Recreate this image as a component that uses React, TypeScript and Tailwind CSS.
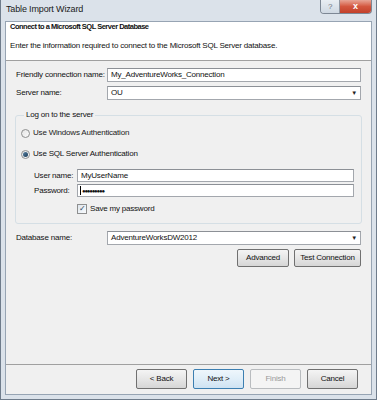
import React from "react";

const btn =
  "h-full flex items-center justify-center rounded-[2px] border border-[#707070] bg-linear-to-b from-[#f4f4f4] via-[#e6e6e6] to-[#d6d6d6] text-[#111]";

function TextBox({ value, drop }: { value: string; drop?: boolean }) {
  return (
    <div className="flex-1 h-full flex items-center border border-[#a3a7ad] border-t-[#8c9096] bg-white pl-[3px] pr-[3px]">
      <span className="flex-1 leading-[10px]">{value}</span>
      {drop && <span className="text-[6px] leading-none text-[#222]">▼</span>}
    </div>
  );
}

function Radio({ checked }: { checked?: boolean }) {
  return (
    <span className="w-[9px] h-[9px] rounded-full border border-[#8e8f8f] bg-linear-to-br from-[#e4e4e4] to-[#fbfbfb] flex items-center justify-center">
      {checked && <span className="w-[5px] h-[5px] rounded-full bg-linear-to-br from-[#5b86a8] to-[#1b3a55]" />}
    </span>
  );
}

export default function App() {
  return (
    <div className="w-[377px] h-[400px] flex flex-col bg-[#dbe2ea] border-x border-b border-[#6f7c8b] font-['Liberation_Sans',Arial,sans-serif] text-[8px] tracking-[-0.2px] text-[#111]">
      {/* title bar */}
      <div className="h-[21px] flex items-start justify-between pl-[5px] pr-[4px]">
        <span className="pt-[4px] text-[9px] leading-[11px] tracking-[-0.15px] text-[#1a1a1a]">
          Table Import Wizard
        </span>
        <div className="flex h-[14px] rounded-b-[4px] border border-t-0 border-[#7d8794] overflow-hidden">
          <div className="w-[19px] flex items-center justify-center bg-linear-to-b from-[#e9eef3] to-[#cfd8e2] border-r border-[#8f98a4] text-[8px] text-[#6b7480]">
            ?
          </div>
          <div className="w-[31px] flex items-center justify-center bg-linear-to-b from-[#e7a496] via-[#d3563f] to-[#c2402a] text-[9px] font-bold text-white">
            x
          </div>
        </div>
      </div>

      {/* inner panel */}
      <div className="flex-1 mx-[4px] mb-[4px] flex flex-col border border-[#97a4b3] bg-[#f0f0f0]">
        {/* header */}
        <div className="h-[39px] bg-white border-b border-[#a0a0a0] pl-[4px]">
          <div className="font-bold text-[7.5px] leading-[10px] tracking-[-0.5px]">
            Connect to a Microsoft SQL Server Database
          </div>
          <div className="mt-[9px] leading-[10px]">
            Enter the information required to connect to the Microsoft SQL Server database.
          </div>
        </div>

        {/* form */}
        <div className="flex-1 px-[10px] pt-[7px]">
          <div className="h-[14px] flex items-center">
            <span className="w-[91px]">Friendly connection name:</span>
            <TextBox value="My_AdventureWorks_Connection" />
          </div>
          <div className="h-[14px] mt-[4px] flex items-center">
            <span className="w-[91px]">Server name:</span>
            <TextBox value="OU" drop />
          </div>

          <fieldset className="mt-[10px] -mx-[1px] border border-[#d5dfe5] rounded-[3px] pl-[5px] pr-[7px] pb-[9px]">
            <legend className="ml-[3px] px-[2px] leading-[10px]">Log on to the server</legend>
            <div className="mt-[8px] h-[10px] flex items-center gap-[3px]">
              <Radio />
              <span className="text-[#222]">Use Windows Authentication</span>
            </div>
            <div className="mt-[11px] h-[10px] flex items-center gap-[3px]">
              <Radio checked />
              <span>Use SQL Server Authentication</span>
            </div>
            <div className="mt-[10px] h-[13px] flex items-center pl-[13px]">
              <span className="w-[43px]">User name:</span>
              <TextBox value="MyUserName" />
            </div>
            <div className="mt-[2px] h-[13px] flex items-center pl-[13px]">
              <span className="w-[43px]">Password:</span>
              <div className="flex-1 h-full flex items-center border border-[#a3a7ad] border-t-[#8c9096] bg-white pl-[2px]">
                <span className="w-[1px] h-[9px] bg-black mr-[1px]" />
                <span className="text-[6px] leading-none tracking-[-1.2px]">●●●●●●●●●</span>
              </div>
            </div>
            <div className="mt-[7px] h-[10px] flex items-center pl-[56px] gap-[3px]">
              <span className="w-[10px] h-[10px] border border-[#8e8f8f] bg-linear-to-br from-[#dfe6ee] to-[#f8fafc] flex items-center justify-center text-[8px] leading-none text-[#2a4460]">
                ✓
              </span>
              <span>Save my password</span>
            </div>
          </fieldset>

          <div className="h-[14px] mt-[7px] flex items-center">
            <span className="w-[91px]">Database name:</span>
            <TextBox value="AdventureWorksDW2012" drop />
          </div>
          <div className="h-[18px] mt-[4px] flex justify-end gap-[5px]">
            <div className={`${btn} w-[52px]`}>Advanced</div>
            <div className={`${btn} w-[67px]`}>Test Connection</div>
          </div>
        </div>

        {/* footer */}
        <div className="border-t border-[#a0a0a0] pt-[4px] pb-[5px] pr-[13px] flex justify-end gap-[6px]">
          <div className="h-[20px] w-[51px] flex">
            <div className={`${btn} w-full`}>&lt; Back</div>
          </div>
          <div className="h-[20px] w-[51px] flex items-center justify-center rounded-[2px] border border-[#3c7fb1] bg-linear-to-b from-[#eef6fc] via-[#e0eef8] to-[#cfe3f2] text-[#111]">
            Next &gt;
          </div>
          <div className="h-[20px] w-[51px] flex items-center justify-center rounded-[2px] border border-[#b9bcbf] bg-[#f4f4f4] text-[#9a9a9a]">
            Finish
          </div>
          <div className="h-[20px] w-[51px] flex">
            <div className={`${btn} w-full`}>Cancel</div>
          </div>
        </div>
      </div>
    </div>
  );
}
